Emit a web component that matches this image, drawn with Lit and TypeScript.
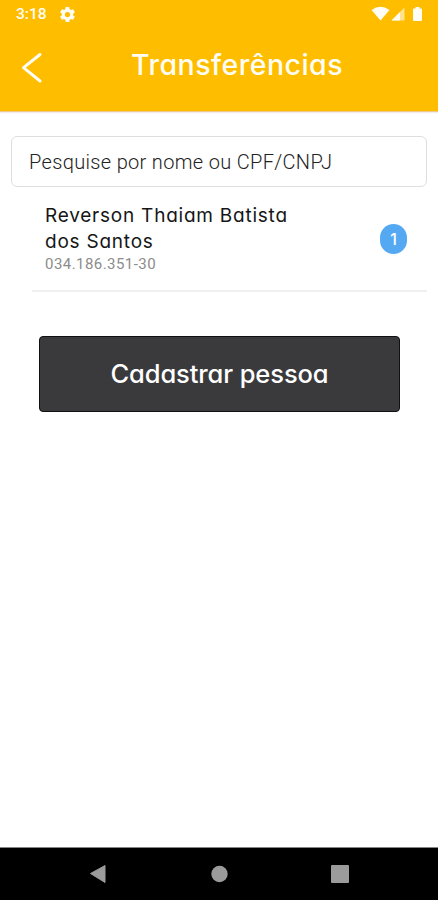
import { LitElement, html, css } from "lit";
import { customElement } from "lit/decorators.js";

@customElement("app-root")
export class AppRoot extends LitElement {
  static styles = css`
    :host {
      display: flex;
      flex-direction: column;
      height: 900px;
      background: #fff;
      overflow: hidden;
      font-family: Inter, Roboto, sans-serif;
      font-feature-settings: "cv11" 1;
      font-kerning: normal;
    }
    * { box-sizing: border-box; }
    svg { display: block; }
    header {
      height: 112px;
      flex: none;
      background: #ffbd00;
      border-bottom: 1px solid #eec98a;
      color: #fffdf4;
      box-shadow: 0 1px 1px #f3ecec;
    }
    .status {
      display: flex;
      align-items: center;
      height: 28px;
      padding: 0 15px 0 16px;
      font: 500 15.5px/30px Roboto, sans-serif;
    }
    .status .gear { margin-left: 13px; }
    .status .tray { margin-left: auto; }
    .bar { display: flex; padding-left: 20px; }
    .back { margin-top: 23px; }
    h1 {
      margin: 19px 0 0 88px;
      font-size: 28.5px;
      line-height: 36px;
      font-weight: 500;
      letter-spacing: 0.48px;
      white-space: nowrap;
    }
    main { flex: 1; }
    .search {
      margin: 24px 11px 0 11px;
      height: 51px;
      border: 1.5px solid #dedede;
      border-radius: 6px;
      padding-left: 17px;
      font: 300 20px/50px Roboto, sans-serif;
      letter-spacing: 0.33px;
      color: #222;
      white-space: nowrap;
    }
    .row {
      display: flex;
      margin: 0 11px 0 32px;
      padding: 16px 20px 0 13px;
      height: 105px;
      border-bottom: 2px solid #f0f0f0;
    }
    .who { flex: 1; }
    .name {
      font-size: 19px;
      line-height: 26px;
      letter-spacing: 0.77px;
      color: #161616;
      white-space: nowrap;
    }
    .doc {
      font: 400 15px/19px Roboto, sans-serif;
      letter-spacing: 0.45px;
      color: #8c8c8c;
      white-space: nowrap;
    }
    .badge {
      width: 27px;
      height: 30px;
      margin-top: 21px;
      border-radius: 13.5px;
      background: #55a9f3;
      color: #fff;
      text-align: center;
      font-size: 16px;
      line-height: 31px;
      font-weight: 500;
    }
    .cta {
      display: block;
      width: 361px;
      height: 76px;
      margin: 44px 0 0 39px;
      padding: 0;
      border: 1px solid #101012;
      border-radius: 4px;
      background: #3a3a3c;
      color: #fff;
      font: 500 25.5px/74px Inter, sans-serif;
      letter-spacing: -0.1px;
      font-feature-settings: inherit;
      white-space: nowrap;
    }
    nav {
      flex: none;
      height: 53px;
      border-top: 1px solid #858585;
      background: #000;
    }
  `;

  render() {
    return html`
      <header>
        <div class="status">
          <span class="time">3:18</span>
          <svg class="gear" width="15" height="15" viewBox="2 2 20 20">
            <path fill="#fffdf4" fill-rule="evenodd" d="M19.4 13a7.5 7.5 0 0 0 0-2l2.1-1.6a.5.5 0 0 0 .1-.7l-2-3.4a.5.5 0 0 0-.6-.2l-2.5 1a7.300 7.300 0 0 0-1.700-1l-.4-2.700a.5.5 0 0 0-.5-.4h-4a.5.5 0 0 0-.5.4L9 5.100a7.300 7.300 0 0 0-1.700 1l-2.400-1a.5.5 0 0 0-.6.2l-2 3.400a.5.5 0 0 0 .1.700L4.500 11a7.500 7.500 0 0 0 0 2l-2.100 1.600a.5.5 0 0 0-.1.700l2 3.400c.1.200.4.300.6.200l2.500-1a7.300 7.300 0 0 0 1.700 1l.4 2.700c0 .2.2.4.5.4h4c.2 0 .4-.2.5-.4l.4-2.700a7.300 7.300 0 0 0 1.700-1l2.400 1c.2.100.5 0 .6-.2l2-3.400a.5.5 0 0 0-.1-.7zM12 15.500a3.500 3.500 0 1 1 0-7 3.500 3.500 0 0 1 0 7z"/>
          </svg>
          <svg class="tray" width="52" height="16" viewBox="371 6 52 16">
            <path fill="#fffdf4" d="M371.500 10q9-6.500 18 0L380.500 20.500z"/>
            <path fill="#ffe28c" d="M404.500 7.500V20.500H391.500z"/>
            <path fill="#fffdf4" d="M400 12V20.500H391.500z"/>
            <path fill="#fffdf4" d="M413.500 8.500h2V7h4v1.500h1.500q1 0 1 1V20q0 1-1 1h-7q-1 0-1-1V9.500q0-1 .500-1z"/>
          </svg>
        </div>
        <div class="bar">
          <svg class="back" width="23" height="34" viewBox="20 51 23 34">
            <path d="M40 54.500L23.500 67.700L40 81" fill="none" stroke="#fffdf4" stroke-width="3" stroke-linecap="round" stroke-linejoin="round"/>
          </svg>
          <h1>Transferências</h1>
        </div>
      </header>
      <main>
        <div class="search">Pesquise por nome ou CPF/CNPJ</div>
        <div class="row">
          <div class="who">
            <div class="name">Reverson Thaiam Batista<br />dos Santos</div>
            <div class="doc">034.186.351-30</div>
          </div>
          <div class="badge">1</div>
        </div>
        <button class="cta">Cadastrar pessoa</button>
      </main>
      <nav>
        <svg width="438" height="52" viewBox="0 848 438 52" fill="#9b9b9b">
          <path d="M90.500 873.500L105 865.500V882.500z" stroke="#9b9b9b" stroke-linejoin="round"/>
          <circle cx="219.500" cy="874" r="8.200"/>
          <rect x="331" y="865" width="18" height="18" rx="1"/>
        </svg>
      </nav>
    `;
  }
}
